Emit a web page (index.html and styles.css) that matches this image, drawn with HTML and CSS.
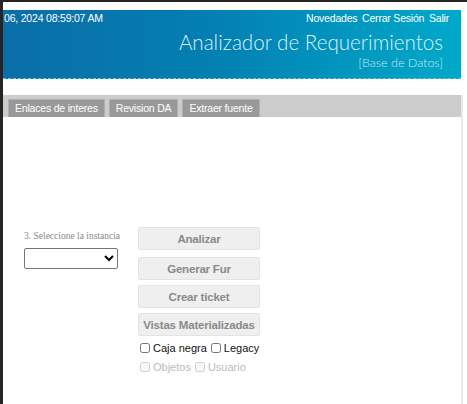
FILE: index.html
```html
<!DOCTYPE html>
<html lang="es">
<head>
<meta charset="utf-8">
<title>Analizador de Requerimientos</title>
<link rel="stylesheet" href="styles.css">
</head>
<body>
<div class="page">
  <header class="header">
    <div class="topline">
      <span class="date">06, 2024 08:59:07 AM</span>
      <nav class="links"><a>Novedades</a> <a>Cerrar Sesión</a> <a>Salir</a></nav>
    </div>
    <div class="brand">
      <div class="title">Analizador de Requerimientos</div>
      <div class="subtitle">[Base de Datos]</div>
    </div>
  </header>
  <div class="main">
    <div class="tabbar">
      <span class="tab">Enlaces de interes</span>
      <span class="tab">Revision DA</span>
      <span class="tab">Extraer fuente</span>
    </div>
    <div class="content">
      <div class="leftcol">
        <div class="label">3. Seleccione la instancia</div>
        <select class="select"><option></option></select>
      </div>
      <div class="rightcol">
        <button class="btn btn-first">Analizar</button>
        <button class="btn">Generar Fur</button>
        <button class="btn">Crear ticket</button>
        <button class="btn">Vistas Materializadas</button>
        <div class="checks">
          <label class="chk"><input type="checkbox"> Caja negra</label>
          <label class="chk"><input type="checkbox"> Legacy</label>
        </div>
        <div class="checks disabled">
          <label class="chk"><input type="checkbox" disabled> Objetos</label>
          <label class="chk"><input type="checkbox" disabled> Usuario</label>
        </div>
      </div>
    </div>
  </div>
</div>
</body>
</html>
```
FILE: styles.css
```css
html, body {
  margin: 0;
  padding: 0;
  background: #252525;
  height: 100%;
  overflow: hidden;
}
.page {
  margin: 2px 0 0 3px;
  background: #fff;
  height: 402px;
  padding-top: 8px;
  box-sizing: border-box;
  font-family: "Liberation Sans", Arial, sans-serif;
}
.header {
  width: 458px;
  height: 69px;
  box-sizing: border-box;
  background: linear-gradient(90deg, #0a6ea8 0%, #037fb2 45%, #00a9c9 100%);
  border-bottom: 1px dashed #5fc0de;
  color: #fff;
  padding: 2px 12px 0 1px;
}
.topline {
  display: flex;
  justify-content: space-between;
  font-size: 10.5px;
  line-height: 13px;
  letter-spacing: -0.2px;
}
.links a { color: #fff; margin-left: 2px; }
.brand {
  display: flex;
  flex-direction: column;
  align-items: flex-end;
  margin-top: 5px;
  margin-right: 6px;
}
.title {
  font-family: Lato, sans-serif;
  font-weight: 300;
  font-size: 20.6px;
  line-height: 25px;
  color: #dff0f7;
}
.subtitle {
  font-family: Lato, sans-serif;
  font-weight: 300;
  font-size: 12.5px;
  line-height: 15px;
  color: #cde8f2;
  margin-top: 0;
}
.main {
  margin-top: 16px;
  width: 458px;
  border-right: 2px solid #e9e9e9;
  height: 310px;
}
.tabbar {
  background: #cccccc;
  height: 22px;
  padding: 4px 0 0 5px;
  box-sizing: border-box;
  display: flex;
  gap: 4px;
  align-items: flex-end;
}
.tab {
  background: #999;
  border: 1px solid #b0b0b0;
  border-bottom: none;
  color: #fff;
  font-size: 10.5px;
  letter-spacing: -0.2px;
  line-height: 17px;
  padding: 0 6px;
  height: 18px;
  box-sizing: border-box;
}
.content {
  display: flex;
  padding-top: 110px;
}
.leftcol {
  margin-left: 21px;
  width: 114px;
  padding-top: 4px;
}
.label {
  font-family: "Liberation Serif", serif;
  font-size: 9.5px;
  color: #888;
  line-height: 11px;
}
.select {
  display: block;
  margin-top: 6px;
  width: 94px;
  height: 21px;
  border: 1px solid #767676;
  border-radius: 2px;
  background: #fff;
}
.rightcol {
  display: flex;
  flex-direction: column;
}
.btn {
  width: 122px;
  height: 23px;
  margin-top: 5px;
  background: #efefef;
  border: 1px solid #e3e3e3;
  border-radius: 2px;
  color: #8a8a8a;
  font-family: "Liberation Sans", Arial, sans-serif;
  font-weight: bold;
  font-size: 11.5px;
  letter-spacing: -0.2px;
  white-space: nowrap;
  padding: 0;
}
.btn-first { margin-top: 0; margin-bottom: 2px; }
.checks {
  display: flex;
  gap: 4px;
  margin-left: 2px;
  margin-top: 5px;
  font-size: 11px;
  color: #111;
  line-height: 14px;
}
.checks + .checks { margin-top: 5px; }
.chk { display: flex; align-items: center; }
.chk input {
  width: 10px;
  height: 10px;
  margin: 0 3px 0 0;
}
.disabled { color: #bbb; }
```
